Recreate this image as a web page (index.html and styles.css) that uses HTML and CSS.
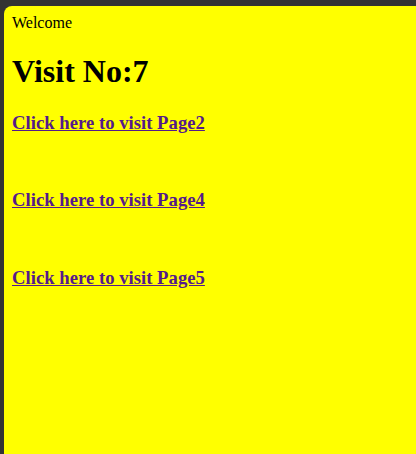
FILE: index.html
```html
<!DOCTYPE html>
<html>
<head>
<meta charset="utf-8">
<title>Welcome</title>
<link rel="stylesheet" href="styles.css">
</head>
<body>
<div class="viewport">
Welcome
<h1 class="title">Visit No:7</h1>
<h3 class="entry"><a class="link" href="#page2">Click here to visit Page2</a></h3>
<br>
<h3 class="entry"><a class="link" href="#page4">Click here to visit Page4</a></h3>
<br>
<h3 class="entry"><a class="link" href="#page5">Click here to visit Page5</a></h3>
</div>
</body>
</html>
```
FILE: styles.css
```css
html, body {
  margin: 0;
  padding: 0;
  height: 100%;
}
body {
  background: #333333;
  font-family: "Liberation Serif", "Times New Roman", serif;
  font-size: 16px;
  color: #000;
  display: flex;
  flex-direction: column;
  padding: 6px 0 0 4px;
  box-sizing: border-box;
}
.viewport {
  flex: 1;
  background: #ffff00;
  border-top-left-radius: 8px;
  padding: 8px;
  display: flow-root;
}
.title {
  font-size: 32px;
  font-weight: bold;
  margin: 21.44px 0;
}
.entry {
  font-size: 18.72px;
  font-weight: bold;
  margin: 18.72px 0;
}
.link {
  color: #551a8b;
  text-decoration: underline;
}
```
